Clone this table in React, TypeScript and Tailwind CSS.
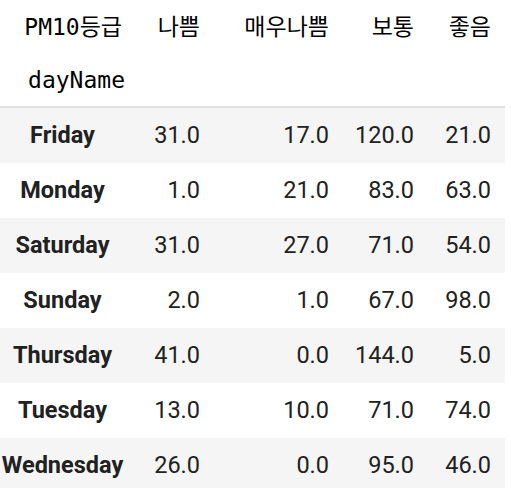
import React from 'react';

const rows: [string, string, string, string, string][] = [
  ['Friday', '31.0', '17.0', '120.0', '21.0'],
  ['Monday', '1.0', '21.0', '83.0', '63.0'],
  ['Saturday', '31.0', '27.0', '71.0', '54.0'],
  ['Sunday', '2.0', '1.0', '67.0', '98.0'],
  ['Thursday', '41.0', '0.0', '144.0', '5.0'],
  ['Tuesday', '13.0', '10.0', '71.0', '74.0'],
  ['Wednesday', '26.0', '0.0', '95.0', '46.0'],
];

const mono = { fontFamily: '"DejaVu Sans Mono", "Noto Sans CJK KR", monospace' };
const widths = ['w-[125px]', 'w-[75px]', 'w-[129px]', 'w-[85px]', 'w-[77px]'];

export default function App() {
  return (
    <div className="w-[511px] h-[488px] overflow-hidden bg-white">
      <div className="w-[505px]">
        {/* column header */}
        <div className="flex h-[54px] items-center text-[23px] text-black" style={mono}>
          <div className={`${widths[0]} text-right pr-[3px]`}>PM10등급</div>
          <div className={`${widths[1]} text-right`}>나쁨</div>
          <div className={`${widths[2]} text-right`}>매우나쁨</div>
          <div className={`${widths[3]} text-right`}>보통</div>
          <div className={`${widths[4]} text-right`}>좋음</div>
        </div>
        <div className="flex h-[54px] items-center text-[23px] text-black border-b-2 border-[#e0e0e0]" style={mono}>
          <div className={`${widths[0]} text-right`}>dayName</div>
        </div>

        {/* body */}
        <div style={{ fontFamily: 'Roboto, "Noto Sans", sans-serif' }} className="text-[23.5px] text-[#212121]">
          {rows.map((r, i) => (
            <div
              key={r[0]}
              className={`flex h-[55px] items-center ${i % 2 === 0 ? 'bg-[#f5f5f5]' : 'bg-white'}`}
            >
              <div className={`${widths[0]} text-center font-bold whitespace-nowrap`}>{r[0]}</div>
              <div className={`${widths[1]} text-right`}>{r[1]}</div>
              <div className={`${widths[2]} text-right`}>{r[2]}</div>
              <div className={`${widths[3]} text-right`}>{r[3]}</div>
              <div className={`${widths[4]} text-right`}>{r[4]}</div>
            </div>
          ))}
        </div>
      </div>
    </div>
  );
}
